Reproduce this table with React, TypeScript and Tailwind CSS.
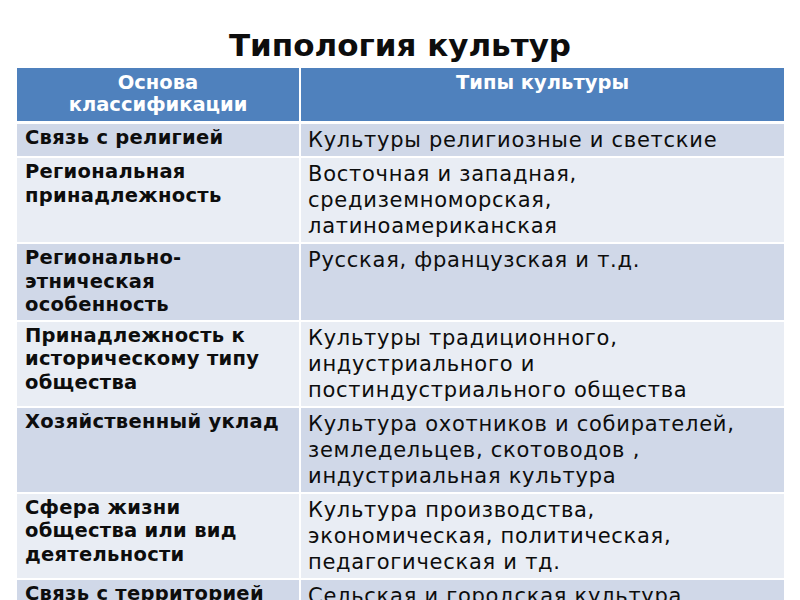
const ROWS: { basis: string[]; types: string[] }[] = [
  { basis: ['Связь с религией'], types: ['Культуры религиозные и светские'] },
  {
    basis: ['Региональная', 'принадлежность'],
    types: ['Восточная и западная,', 'средиземноморская,', 'латиноамериканская'],
  },
  {
    basis: ['Регионально-', 'этническая', 'особенность'],
    types: ['Русская, французская и т.д.'],
  },
  {
    basis: ['Принадлежность к', 'историческому типу', 'общества'],
    types: ['Культуры традиционного,', 'индустриального и', 'постиндустриального общества'],
  },
  {
    basis: ['Хозяйственный уклад'],
    types: ['Культура охотников и собирателей,', 'земледельцев, скотоводов ,', 'индустриальная культура'],
  },
  {
    basis: ['Сфера жизни', 'общества или вид', 'деятельности'],
    types: ['Культура производства,', 'экономическая, политическая,', 'педагогическая и тд.'],
  },
  { basis: ['Связь с территорией'], types: ['Сельская и городская культура'] },
];

export default function App() {
  return (
    <div className="w-[800px] h-[600px] overflow-hidden bg-white font-['DejaVu_Sans',sans-serif] text-[#0d0d0d]">
      <h1 className="pt-[25px] h-[68px] text-center text-[31px] leading-[40px] font-bold">
        Типология культур
      </h1>

      <div className="ml-[17px] w-[767px] grid grid-cols-[282px_483px] gap-x-[2px]">
        {/* header */}
        <div className="bg-[#4f81bd] h-[53px] pt-[4px] text-center text-white font-bold text-[19.5px] leading-[22px]">
          <p>Основа</p>
          <p>классификации</p>
        </div>
        <div className="bg-[#4f81bd] h-[53px] pt-[4px] text-center text-white font-bold text-[19.5px] leading-[22px]">
          <p>Типы культуры</p>
        </div>
        <div className="col-span-2 h-[3px]" />

        {ROWS.map((r, i) => (
          <Row key={i} basis={r.basis} types={r.types} band={i % 2 === 0} last={i === ROWS.length - 1} />
        ))}
      </div>
    </div>
  );
}

function Row({
  basis,
  types,
  band,
  last,
}: {
  basis: string[];
  types: string[];
  band: boolean;
  last: boolean;
}) {
  const bg = band ? 'bg-[#d0d8e8]' : 'bg-[#e9edf4]';
  return (
    <>
      <div className={`${bg} pl-[8px] pt-[2px] pb-[3px] font-bold text-[19.5px] leading-[23.5px] tracking-[0.015em]`}>
        {basis.map((t) => (
          <p key={t}>{t}</p>
        ))}
      </div>
      <div className={`${bg} pl-[7px] pt-[3px] pb-[3px] text-[21px] leading-[26px] tracking-[0.035em]`}>
        {types.map((t) => (
          <p key={t}>{t}</p>
        ))}
      </div>
      {!last && <div className="col-span-2 h-[2px]" />}
    </>
  );
}
